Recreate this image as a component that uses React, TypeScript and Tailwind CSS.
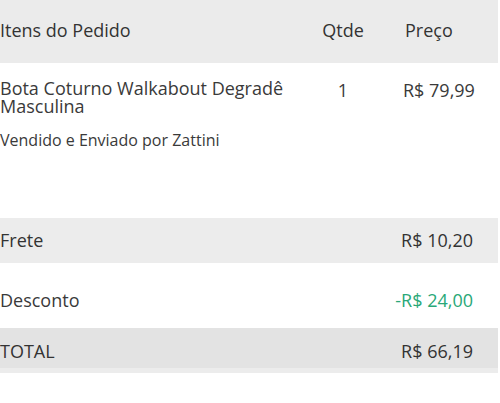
export default function App() {
  return (
    <div
      className="w-[500px] h-[403px] bg-white text-[#3a3a3a]"
      style={{ fontFamily: '"Open Sans", "Noto Sans", sans-serif' }}
    >
      <div className="w-[498px]">
        <div className="grid grid-cols-[303px_80px_115px] items-center h-[63px] bg-[#ebebeb] text-[#333] text-[18px] pb-[3px]">
          <div>Itens do Pedido</div>
          <div className="text-center">Qtde</div>
          <div className="pl-[22px]">Preço</div>
        </div>
        <div className="grid grid-cols-[303px_80px_115px] h-[155px] pt-[16px]">
          <div>
            <div className="text-[18px] leading-[18px]">Bota Coturno Walkabout Degradê Masculina</div>
            <div className="text-[16px] leading-[22px] mt-[14px]">Vendido e Enviado por Zattini</div>
          </div>
          <div className="text-center text-[18px] leading-[18px] pt-[2px]">1</div>
          <div className="pl-[20px] text-[18px] leading-[18px] pt-[2px]">R$ 79,99</div>
        </div>
        <div className="flex items-center justify-between h-[45px] bg-[#ececec] pr-[25px] text-[18px] text-[#333]">
          <span>Frete</span>
          <span>R$ 10,20</span>
        </div>
        <div className="flex items-center justify-between h-[65px] pr-[25px] text-[18px] pt-[10px]">
          <span>Desconto</span>
          <span className="text-[#2aa878]">-R$ 24,00</span>
        </div>
        <div className="flex items-center justify-between h-[40px] bg-[#e3e3e3] pr-[25px] text-[18px] text-[#333] pt-[6px]">
          <span>TOTAL</span>
          <span>R$ 66,19</span>
        </div>
        <div className="h-[5px] bg-[#ececec]" />
      </div>
    </div>
  );
}
